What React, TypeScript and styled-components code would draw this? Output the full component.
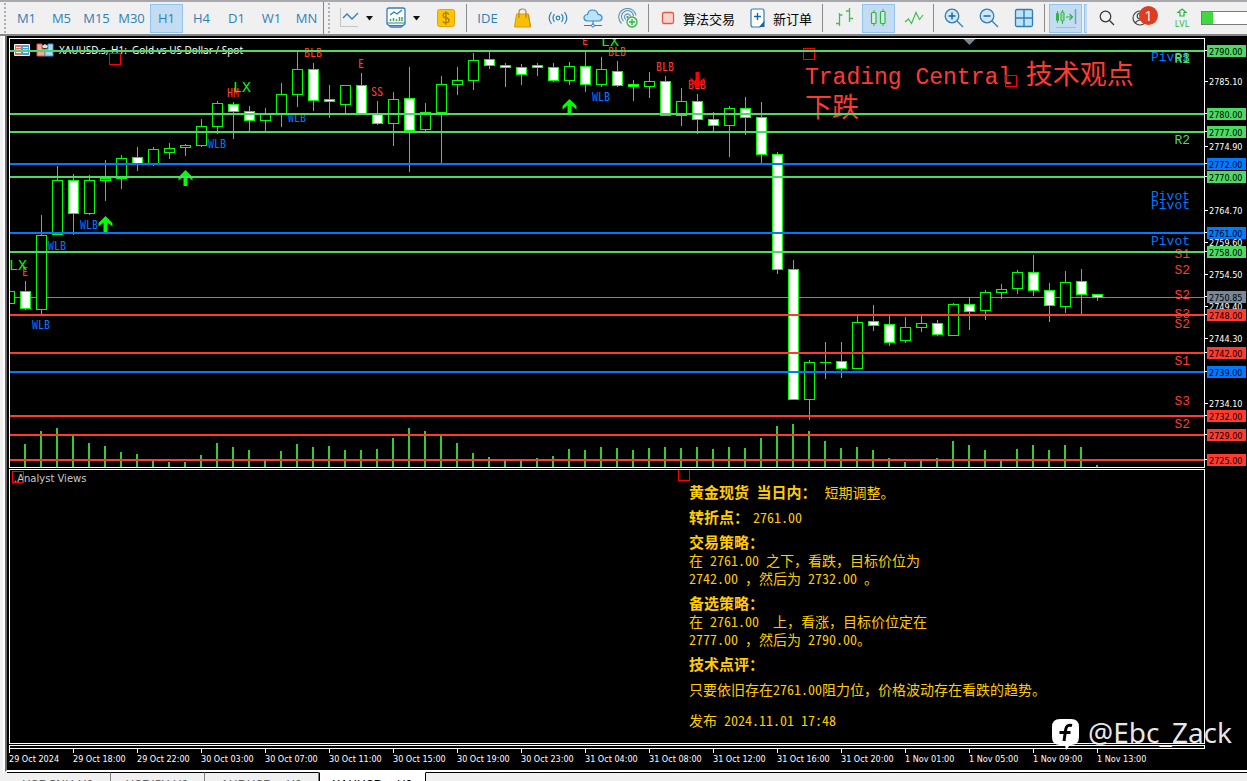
import React from "react";
import styled, { createGlobalStyle, css } from "styled-components";

const UP = "#4cd964";
const PIVOT = "#007aff";
const DOWN = "#ff3b30";
const CURRENT = "#778899";
const LIME = "#00ff00";
const AMBER = "#ffcc00";

const TERMINAL_FONT = `"Noto Sans CJK SC", "Liberation Mono", monospace`;
const MONO_FONT = `"Liberation Mono", "Noto Sans CJK SC", monospace`;
const AXIS_FONT = `"DejaVu Sans Condensed", "DejaVu Sans", sans-serif`;
const UI_FONT = `"Open Sans", "Noto Sans CJK SC", sans-serif`;

const GlobalStyle = createGlobalStyle`
  * { box-sizing: border-box; }
  body { margin: 0; background: #f0f0f0; font-family: ${UI_FONT}; }
  button { font: inherit; margin: 0; padding: 0; border: 0; background: none; color: inherit; }
`;

/* ---------- window ---------- */

const Window = styled.div`
  height: 100vh;
  display: flex;
  flex-direction: column;
  overflow: hidden;
  background: #f0f0f0;
`;

const Body = styled.div`
  flex: 1;
  display: grid;
  grid-template-columns: 5px minmax(0, 1fr);
`;

const Gutter = styled.div`
  border-right: 2px solid #fff;
  background: #f0f0f0;
`;

/* ---------- toolbar ---------- */

const ToolbarRow = styled.header`
  display: flex;
  align-items: center;
  flex: none;
  height: 36px;
  overflow: hidden;
  border-top: 2px solid #a8a8ac;
  border-bottom: 2px solid #868686;
  background: #f0f0f0;
  white-space: nowrap;
`;

const Group = styled.div`
  display: flex;
  flex: none;
  align-items: center;
  gap: 2px;
`;

const FrameGroup = styled(Group)`
  padding-left: 2px;
`;

const Grip = styled.i`
  flex: none;
  width: 2px;
  height: 30px;
  margin: 0 2px 0 4px;
  background: repeating-linear-gradient(#b0b0b0 0 2px, transparent 2px 4px);
`;

const BandEdge = styled.i`
  flex: none;
  width: 1px;
  align-self: stretch;
  background: #868686;
`;

const Separator = styled.i<{ $tight?: boolean }>`
  width: 1px;
  height: 28px;
  margin: 0 ${(p) => (p.$tight ? 1 : 2)}px;
  background: #8c8c8c;
`;

const pressed = css`
  background: #c3dcf2;
  border: 1px solid #90c5f2;
`;

const ToolButton = styled.button<{ $on?: boolean }>`
  display: flex;
  align-items: center;
  justify-content: center;
  flex: none;
  width: 33px;
  height: 29px;
  font-size: 13px;
  color: #2f7fb6;
  ${(p) => p.$on && pressed}
`;

const LabelButton = styled(ToolButton)`
  justify-content: flex-start;
  gap: 7px;
  width: auto;
  padding: 0 6px 0 7px;
  color: #000;
  font-family: "Noto Sans CJK SC", sans-serif;
`;

const CaretButton = styled.button`
  display: flex;
  align-items: center;
  width: 12px;
  height: 29px;
`;

const SplitButton = styled.div`
  display: flex;

  & + button { margin-left: 3px; }
`;

const Sliver = styled.i`
  width: 3px;
  height: 29px;
  margin-right: 1px;
  ${pressed}
  border-right: 0;
`;

const AccountButton = styled(ToolButton)`
  position: relative;
  width: 38px;
`;

const Badge = styled.span`
  position: absolute;
  top: 2px;
  right: 5px;
  width: 19px;
  height: 19px;
  border-radius: 50%;
  background: #e03c20;
  color: #fff;
  font-size: 14px;
  line-height: 19px;
  text-align: center;
`;

const LevelButton = styled(ToolButton)`
  flex-direction: column;
  gap: 2px;
  width: 34px;
  color: #2fb344;
  font-size: 9px;
  line-height: 9px;
`;

const Meter = styled.div`
  width: 60px;
  height: 14px;
  border: 1px solid #7a7a7a;
  background: #fff;
`;

const MeterFill = styled.div`
  width: 11px;
  height: 12px;
  background: #3fd83f;
`;

/* ---------- chart ---------- */

const ChartWindow = styled.main`
  display: flex;
  flex-direction: column;
  gap: 1px;
  padding: 2px 0 0 2px;
  border-left: 2px solid #6c6c6c;
  border-bottom: 2px solid #fff;
  background: #000;
`;

const ChartRow = styled.div`
  display: grid;
  grid-template-columns: minmax(0, 1fr) 42px;
`;

const Pane = styled.section`
  position: relative;
  border: 1px solid #fff;
  overflow: hidden;
`;

const Canvas = styled.svg`
  display: block;
  width: 100%;
  overflow: hidden;
`;

const PlotText = styled.text<{ $color: string }>`
  font-family: ${TERMINAL_FONT};
  font-feature-settings: "hwid";
  font-size: 12px;
  fill: ${(p) => p.$color};
`;

const MonoText = styled.text<{ $size: number; $color: string }>`
  font-family: ${MONO_FONT};
  font-size: ${(p) => p.$size}px;
  fill: ${(p) => p.$color};
`;

const Hanzi = styled.tspan`
  font-size: 27px;
`;

const AxisText = styled.text<{ $dark?: boolean }>`
  font-family: ${AXIS_FONT};
  font-size: 9px;
  fill: ${(p) => (p.$dark ? "#000" : "#fff")};
`;

const TitleText = styled.text`
  font-family: "Noto Sans", sans-serif;
  font-size: 10px;
  fill: #fff;
  white-space: pre;
`;

const Handle = styled.i<{ $left: number; $top: number }>`
  position: absolute;
  left: ${(p) => p.$left}px;
  top: ${(p) => p.$top}px;
  width: 12px;
  height: 12px;
  border: 1px solid #ff0000;
`;

const PaneName = styled.h2`
  position: absolute;
  left: 4px;
  top: 2px;
  margin: 0;
  color: #c8c8c8;
  font: 10px/14px "DejaVu Sans", sans-serif;
`;

const Report = styled.article`
  display: flex;
  flex-direction: column;
  gap: 7px;
  padding: 13px 0 14px 679px;
  color: ${AMBER};
  font-family: ${TERMINAL_FONT};
  font-feature-settings: "hwid";
  font-size: 14px;
  line-height: 18px;
  white-space: pre;

  p { margin: 0; }
`;

const Heading = styled.strong<{ $gap?: number }>`
  font-size: 15px;
  margin-right: ${(p) => p.$gap ?? 4}px;
`;

const FullWidth = styled.span`
  font-feature-settings: normal;
`;

const Published = styled.p`
  && { margin-top: 6px; }
`;

const Strip = styled.div`
  height: 4px;
  border: 1px solid #fff;
`;

const TimeAxis = styled.svg`
  display: block;
  width: 100%;
  height: 20px;
`;

/* ---------- tabs ---------- */

const TabBar = styled.nav`
  display: flex;
  flex: none;
  height: 9px;
  margin-left: 7px;
`;

const Tab = styled.button<{ $on?: boolean }>`
  flex: none;
  height: 24px;
  padding: 0 15px;
  border-top: 1px solid #000;
  border-right: 1px solid #808080;
  color: #606060;
  font: 12px/20px "DejaVu Sans", sans-serif;
  background: #f0f0f0;
  ${(p) =>
    p.$on &&
    css`
      padding: 0 12px;
      background: #fff;
      color: #000;
      border-top-color: #fff;
      border-left: 1px solid #000;
      border-right-color: #000;
    `}
`;

const TabRest = styled.div`
  flex: 1;
  border-top: 1px solid #000;
`;

/* ---------- watermark ---------- */

const Watermark = styled.div`
  position: absolute;
  right: 15px;
  bottom: 31px;
  display: flex;
  align-items: flex-end;
  gap: 8px;
  color: rgba(255, 255, 255, 0.92);
  font: 28px/36px "Noto Sans", sans-serif;
`;

/* ---------- data ---------- */

/* [high, body top, body bottom, low, bearish], one entry each 16px */
type Candle = [number, number, number, number, 0 | 1];

const candles: Candle[] = [
  [291, 291, 303, 303, 0], [281, 291, 308, 309, 1], [215, 235, 309, 314, 0], [166, 180, 234, 234, 0],
  [174, 180, 213, 234, 1], [175, 180, 213, 214, 0], [160, 178, 180, 200, 0], [155, 158, 178, 188, 0],
  [147, 157, 163, 170, 1], [147, 149, 163, 165, 0], [143, 148, 152, 158, 0], [144, 145, 147, 155, 0],
  [119, 126, 145, 146, 0], [101, 103, 126, 133, 0], [102, 104, 111, 138, 1], [106, 111, 120, 131, 1],
  [108, 114, 120, 131, 0], [83, 94, 114, 126, 0], [51, 69, 94, 106, 0], [63, 69, 100, 110, 1],
  [85, 99, 101, 117, 1], [85, 85, 104, 113, 0], [73, 85, 114, 114, 1], [101, 114, 123, 124, 1],
  [92, 99, 123, 145, 0], [67, 98, 130, 171, 1], [103, 112, 129, 132, 0], [76, 84, 112, 164, 0],
  [67, 80, 84, 94, 0], [53, 60, 80, 89, 0], [51, 59, 65, 68, 1], [63, 65, 67, 86, 1],
  [64, 67, 74, 84, 1], [63, 65, 67, 75, 1], [63, 67, 80, 81, 1], [62, 66, 80, 84, 0],
  [51, 66, 84, 91, 1], [57, 69, 84, 86, 0], [61, 71, 85, 86, 1], [80, 84, 86, 100, 1],
  [72, 81, 86, 97, 0], [76, 81, 115, 115, 1], [88, 101, 115, 125, 0], [94, 101, 119, 133, 1],
  [112, 119, 125, 131, 1], [106, 108, 125, 156, 0], [97, 108, 117, 134, 1], [102, 117, 154, 163, 1],
  [152, 154, 269, 273, 1], [260, 269, 399, 399, 1], [360, 362, 399, 419, 0], [342, 362, 362, 378, 0],
  [342, 361, 368, 377, 1], [316, 322, 368, 368, 0], [305, 321, 325, 330, 1], [316, 324, 342, 345, 1],
  [317, 327, 340, 342, 0], [316, 323, 327, 331, 0], [320, 323, 334, 335, 1], [303, 304, 335, 335, 0],
  [297, 304, 311, 329, 1], [290, 292, 310, 319, 0], [284, 289, 292, 298, 0], [270, 272, 288, 293, 0],
  [255, 272, 290, 295, 1], [283, 290, 305, 321, 1], [271, 282, 306, 312, 0], [269, 281, 294, 314, 1],
  [294, 294, 297, 300, 1],
];

const volumes = [
  444, 431, 428, 436, 443, 446, 452, 454, 461, 462, 462, 455, 443, 447, 450, 461, 451, 444, 447, 446, 450, 450, 449,
  438, 428, 431, 435, 443, 453, 457, 459, 460, 458, 456, 449, 450, 447, 448, 450, 448, 447, 448, 447, 449, 447, 448,
  438, 426, 424, 431, 441, 448, 447, 450, 458, 462, 461, 458, 441, 445, 450, 461, 449, 445, 450, 445, 447, 465,
];

const levels: [string, number, string][] = [
  ["2790.00", 51, UP], ["2780.00", 114, UP], ["2777.00", 132, UP], ["2772.00", 164, PIVOT], ["2770.00", 177, UP],
  ["2761.00", 233, PIVOT], ["2758.00", 252, UP], ["2748.00", 315, DOWN], ["2742.00", 353, DOWN],
  ["2739.00", 372, PIVOT], ["2732.00", 416, DOWN], ["2729.00", 435, DOWN], ["2725.00", 460, DOWN],
];

const ticks: [string, number][] = [
  ["2785.10", 81], ["2774.90", 146], ["2764.70", 210], ["2759.60", 242], ["2754.50", 274],
  ["2749.40", 306], ["2744.30", 338], ["2734.10", 403],
];

const marks: [string, number, number, string][] = [
  ["E", 22, 276, DOWN], ["WLB", 32, 329, PIVOT], ["WLB", 48, 250, PIVOT], ["WLB", 80, 229, PIVOT],
  ["WLB", 208, 148, PIVOT], ["HM", 227, 97, DOWN], ["WLB", 288, 122, PIVOT], ["BLB", 304, 57, DOWN],
  ["E", 358, 68, DOWN], ["SS", 371, 96, DOWN], ["E", 582, 45, DOWN], ["BLB", 608, 56, DOWN],
  ["WLB", 592, 101, PIVOT], ["BLB", 656, 71, DOWN], ["BLB", 688, 89, DOWN],
];

const crossings: [number, number][] = [[9, 270], [233, 92], [601, 46]];

const levelNames: [string, number, string][] = [
  ["Pivot", 61, PIVOT], ["R3", 62, UP], ["R1", 63, UP], ["R2", 144, UP], ["Pivot", 200, PIVOT], ["Pivot", 209, PIVOT],
  ["Pivot", 245, PIVOT], ["S1", 258, DOWN], ["S2", 274, DOWN], ["S2", 299, DOWN], ["S3", 318, DOWN],
  ["S2", 328, DOWN], ["S1", 365, DOWN], ["S3", 405, DOWN], ["S2", 428, DOWN],
];

const times = [
  "29 Oct 2024", "29 Oct 18:00", "29 Oct 22:00", "30 Oct 03:00", "30 Oct 07:00", "30 Oct 11:00", "30 Oct 15:00",
  "30 Oct 19:00", "30 Oct 23:00", "31 Oct 04:00", "31 Oct 08:00", "31 Oct 12:00", "31 Oct 16:00", "31 Oct 20:00",
  "1 Nov 01:00", "1 Nov 05:00", "1 Nov 09:00", "1 Nov 13:00",
];

/* ---------- icons ---------- */

const Icon = ({ children, w = 20, h = 20 }: { children: React.ReactNode; w?: number; h?: number }) => (
  <svg width={w} height={h} viewBox={`0 0 ${w} ${h}`} fill="none" aria-hidden="true">
    {children}
  </svg>
);

const Caret = () => (
  <Icon w={9} h={5}>
    <path d="M1 0h7L4.500 4.500z" fill="#111" />
  </Icon>
);

const LineStudyIcon = () => (
  <Icon>
    <path d="M1.500 0v18.500H19" stroke="#c4c4c4" />
    <path d="M4 10l4-4 5 5 6-6" stroke="#2f7fb6" strokeWidth="1.300" />
  </Icon>
);

const IndicatorsIcon = () => (
  <Icon w={20} h={22}>
    <path d="M1 3q0-2 2-2h14q2 0 2 2v14l-4 3H5l-4-3z" fill="#fff" stroke="#2f7fb6" strokeWidth="1.300" />
    <path d="M1 16h18M3 18.500h14" stroke="#2f7fb6" />
    <path d="M4 8l4-3 3 2 5-4" stroke="#2f7fb6" strokeWidth="1.300" />
    <path d="M4.500 14v-2M7.500 14v-3M10.500 14v-2M13.500 14v-4M16 14v-4" stroke="#2fb344" strokeWidth="1.500" />
  </Icon>
);

const DollarIcon = () => (
  <Icon>
    <rect x="1.500" y="1.500" width="17" height="17" rx="2" fill="#fbc504" stroke="#e2a500" />
    <path d="M13 6.500q-1-1.500-3-1.500-2.800 0-2.800 2.300T10 9.900t3 2.500-3 2.500q-2.200 0-3.200-1.600M10 3.300v13.400" stroke="#b07a10" strokeWidth="1.300" />
  </Icon>
);

const BagIcon = () => (
  <Icon>
    <path d="M3.500 6h12l2 13h-16z" fill="#f9bf06" stroke="#d39b10" />
    <path d="M6 10V4q0-3 3.500-3T13 4v6" stroke="#b58522" strokeWidth="1.200" />
    <path d="M15 6l2.500 13" stroke="#c98f14" />
  </Icon>
);

const SignalIcon = () => (
  <Icon>
    <circle cx="10" cy="10" r="1.800" stroke="#2f7fb6" strokeWidth="1.200" />
    <path d="M6.500 6.200q-3 3.800 0 7.600M13.500 6.200q3 3.800 0 7.600M3.500 4q-4.600 6 0 12M16.500 4q4.600 6 0 12" stroke="#2f7fb6" strokeWidth="1.200" />
  </Icon>
);

const CloudIcon = () => (
  <Icon>
    <path d="M4.500 13q-3.500-.5-3.500-3.300T4.500 6.500Q5.500 2 9.500 2q4.500 0 5.500 4.300 4 .2 4 3.500 0 3-3.500 3.200z" fill="#bfe2fb" stroke="#2f8ccc" strokeWidth="1.200" />
    <path d="M10 13v3M1 17.500h7.500M11.500 17.500H19" stroke="#2f7fb6" />
    <circle cx="10" cy="17.500" r="1.500" stroke="#2f7fb6" />
  </Icon>
);

const CommunityIcon = () => (
  <Icon>
    <path d="M3.500 15.500A8.700 8.700 0 1 1 18 7.500M5.500 13a6 6 0 1 1 10-5M8 11.500a3 3 0 1 1 4.500-3" stroke="#5a93bd" strokeWidth="1.100" />
    <circle cx="9.500" cy="9" r="1" fill="#2f7fb6" />
    <circle cx="14" cy="14" r="5" fill="#e6f8e6" stroke="#2fb344" strokeWidth="1.300" />
    <path d="M14 11v6M11 14h6" stroke="#2fb344" strokeWidth="1.400" />
  </Icon>
);

const StopIcon = () => (
  <Icon w={16} h={16}>
    <rect x="2.500" y="2.500" width="11" height="11" rx="1.500" fill="#fbd3cb" stroke="#e05a4c" strokeWidth="1.300" />
  </Icon>
);

const NewOrderIcon = () => (
  <Icon w={16} h={20}>
    <path d="M1 3q0-2 2-2h9q2 0 2 2v11l-4 5H3q-2 0-2-2z" fill="#fff" stroke="#2f7fb6" strokeWidth="1.200" />
    <path d="M14.500 13v6H9z" fill="#1a65a5" />
    <path d="M7.500 5v7M4 8.500h7" stroke="#1a65a5" strokeWidth="1.400" />
  </Icon>
);

const BarsIcon = () => (
  <Icon>
    <path d="M5.500 5v13M5.500 7h3M2 15.500h3.500M15.500 0v14M12 3h3.500M15.500 10.500H19" stroke="#3fbf4f" strokeWidth="1.300" />
  </Icon>
);

const CandlesIcon = () => (
  <Icon>
    <path d="M5 2v16M14 1v17" stroke="#2fb344" />
    <rect x="2.500" y="4.500" width="4.500" height="11" rx="1" fill="#d8efe4" stroke="#2fb344" strokeWidth="1.200" />
    <rect x="11.500" y="3.500" width="4.500" height="12" rx="1" fill="#d8efe4" stroke="#2fb344" strokeWidth="1.200" />
  </Icon>
);

const WaveIcon = () => (
  <Icon>
    <path d="M1 14l3.500-3 3 4.500 4.500-11 3.500 7L19 7" stroke="#3fbf4f" strokeWidth="1.200" />
  </Icon>
);

const ZoomIcon = ({ plus }: { plus?: boolean }) => (
  <Icon>
    <circle cx="8" cy="8" r="6.800" fill="#cfe7f9" stroke="#2f7fb6" strokeWidth="1.300" />
    <path d="M13 13l6 6" stroke="#2f7fb6" strokeWidth="1.300" />
    <path d={plus ? "M8 4.500v7M4.500 8h7" : "M4.500 8h7"} stroke="#1a65a5" strokeWidth="1.500" />
  </Icon>
);

const TilesIcon = () => (
  <Icon>
    <rect x="1.500" y="1.500" width="17" height="17" rx="1.500" fill="#bfe2fb" stroke="#2f7fb6" strokeWidth="1.300" />
    <path d="M10 1v18M1 10h18" stroke="#2f7fb6" strokeWidth="1.400" />
  </Icon>
);

const ShiftIcon = () => (
  <Icon w={22} h={20}>
    <path d="M2.500 3v12M7.500 2v14" stroke="#2fb344" />
    <rect x="1" y="5" width="3" height="8" rx="1" fill="#2fb344" />
    <rect x="6" y="4" width="3" height="9" rx="1" fill="#9bdca5" stroke="#2fb344" />
    <path d="M11 9h6M14.500 6L17.500 9l-3 3" stroke="#2fb344" strokeWidth="1.200" />
    <path d="M20.500 1v15" stroke="#7a9cc0" strokeWidth="1.500" />
    <path d="M1 19.500h20" stroke="#b0b8c0" />
  </Icon>
);

const SearchIcon = () => (
  <Icon w={16} h={16}>
    <circle cx="6.500" cy="6.500" r="5.300" stroke="#333" strokeWidth="1.200" />
    <path d="M10.500 10.500l4.500 4.500" stroke="#333" strokeWidth="1.200" />
  </Icon>
);

const AccountIcon = () => (
  <Icon w={24} h={18}>
    <circle cx="8" cy="9" r="7" stroke="#444" strokeWidth="1.200" />
    <circle cx="8" cy="7" r="2.800" stroke="#444" strokeWidth="1.200" />
    <path d="M3 14q5-6 10 0" stroke="#444" strokeWidth="1.200" />
  </Icon>
);

const LevelIcon = () => (
  <Icon w={12} h={9}>
    <path d="M6 1l4 3.500H8V8H4V4.500H2z" stroke="#2fb344" strokeWidth="1.200" />
  </Icon>
);

const BubbleLogo = () => (
  <Icon w={28} h={31}>
    <path d="M8 0h11q8 0 8 8v10q0 8-8 8h-1l-4 5-1-5H8q-8 0-8-8V8q0-8 8-8z" fill="#fff" />
    <path d="M20 6.500q-5.500-1.500-6.300 4L12 22M7.500 13.500h11" stroke="#000" strokeWidth="3" />
  </Icon>
);

/* ---------- chart pieces ---------- */

const FIRST_X = 9;
const STEP = 16;

const Arrow = ({ x, y, down }: { x: number; y: number; down?: boolean }) => (
  <path
    d="M0 0L7 7v3.500L2 6.500V16h-4V6.500L-7 10.500V7z"
    fill={down ? "#ff0000" : LIME}
    transform={`translate(${x + 0.5} ${y})${down ? " scale(1 -1)" : ""}`}
  />
);

const Square = ({ x, y }: { x: number; y: number }) => (
  <rect x={x + 0.5} y={y + 0.5} width="11" height="11" fill="none" stroke="#ff0000" />
);

const PricePlot = () => (
  <Canvas height="428">
    <g transform="translate(-10 -39)">
      <path d="M963.500 39h12L969.500 45z" fill={CURRENT} />
      <g>
        <rect x="14" y="44" width="16" height="12" rx="1" fill="#fff" />
        <path d="M15 45h7v10h-7z" fill="#e0705f" />
        <path d="M22 45h7v10h-7z" fill="#4a9be0" />
        <path d="M16 47.500h5M16 50h5M16 52.500h5M23 47.500h5M23 50h5M23 52.500h5" stroke="#fff" />
        <path d="M37 44h5v5h3v7h-8z" fill="#f3a89c" stroke="#d9584a" />
        <path d="M53 44h-5v5h-3v7h8z" fill="#a9d8f8" stroke="#3f97db" />
        <path d="M42 46l3-2 3 2-1 2h-4z" fill="#ddd" />
      </g>
      <TitleText x="59" y="54">XAUUSD.s, H1:{"  "}Gold vs US Dollar / Spot</TitleText>
      <rect x="10" y="297" width="100%" height="1" fill={CURRENT} />
      {volumes.map((top, i) => (
        <rect key={i} x={FIRST_X + STEP * (i + 1) - 1} y={top} width="2" height={467 - top} fill="#32cd32" />
      ))}
      {candles.map(([high, top, bottom, low, bear], i) => {
        const x = FIRST_X + STEP * i;
        return (
          <g key={i}>
            <rect x={x} y={high} width="1" height={low - high + 1} fill={LIME} />
            <rect x={x - 5} y={top} width="11" height={bottom - top + 1} fill={LIME} />
            {bottom - top > 1 && (
              <rect x={x - 4} y={top + 1} width="9" height={bottom - top - 1} fill={bear ? "#fff" : "#000"} />
            )}
          </g>
        );
      })}
      <Arrow x={105} y={216} />
      <Arrow x={185} y={170} />
      <Arrow x={569} y={99} />
      {marks.map(([label, x, y, color], i) => (
        <PlotText key={i} x={x} y={y} $color={color}>{label}</PlotText>
      ))}
      {crossings.map(([x, y]) => (
        <MonoText key={x} x={x} y={y} $color={LIME} $size={15}>LX</MonoText>
      ))}
      <Arrow x={697} y={88} down />
      <MonoText x="805" y="84" $color={DOWN} $size={23}>
        Trading Central <Hanzi>技术观点</Hanzi>
      </MonoText>
      <MonoText x="805" y="117" $color={DOWN} $size={23}><Hanzi>下跌</Hanzi></MonoText>
      <Square x={109} y={53} />
      <Square x={803} y={48} />
      <Square x={1005} y={75} />
    </g>
    {levelNames.map(([label, y, color], i) => (
      <MonoText key={i} x="100%" dx="-14" y={y - 39} textAnchor="end" $color={color} $size={13}>{label}</MonoText>
    ))}
    {levels.map(([price, y, color]) => (
      <rect key={price} x="0" y={y - 40} width="100%" height="2" fill={color} />
    ))}
  </Canvas>
);

const PriceScale = () => (
  <Canvas height="430">
    <g transform="translate(0 -38)">
      {ticks.map(([price, y]) => (
        <g key={price}>
          <rect x="0" y={y} width="3" height="1" fill="#fff" />
          <AxisText x="4" y={y + 4}>{price}</AxisText>
        </g>
      ))}
      {[...levels, ["2750.85", 297, CURRENT] as [string, number, string]].map(([price, y, color]) => (
        <g key={price}>
          <rect x="0" y={y - 1} width="2" height="1" fill="#fff" />
          <rect x="2" y={y - 6} width="39" height="12" fill={color} />
          <AxisText x="4" y={y + 4} $dark>{price}</AxisText>
        </g>
      ))}
    </g>
  </Canvas>
);

/* Half-width figures are on for the report; its commas stay full width. */
const Prose = ({ children }: { children: string }) => (
  <>
    {children.split(/(，)/).map((part, i) => (part === "，" ? <FullWidth key={i}>，</FullWidth> : part))}
  </>
);

const AnalystReport = () => (
  <Report>
    <p><Heading $gap={8}>黄金现货 当日内：</Heading>短期调整。</p>
    <p><Heading>转折点：</Heading>2761.00</p>
    <p><Heading>交易策略：</Heading><Prose>{"\n在 2761.00 之下，看跌，目标价位为\n2742.00 ，然后为 2732.00 。"}</Prose></p>
    <p><Heading>备选策略：</Heading><Prose>{"\n在 2761.00  上，看涨，目标价位定在\n2777.00 ，然后为 2790.00。"}</Prose></p>
    <p><Heading>技术点评：</Heading></p>
    <p><Prose>只要依旧存在2761.00阻力位，价格波动存在看跌的趋势。</Prose></p>
    <Published>发布 2024.11.01 17:48</Published>
  </Report>
);

const frames = ["M1", "M5", "M15", "M30", "H1", "H4", "D1", "W1", "MN"];

const Toolbar = () => (
  <ToolbarRow>
    <Grip />
    <FrameGroup>
      {frames.map((f) => (
        <ToolButton key={f} $on={f === "H1"}>{f}</ToolButton>
      ))}
    </FrameGroup>
    <BandEdge />
    <Grip />
    <Group>
      <SplitButton>
        <ToolButton aria-label="Line studies"><LineStudyIcon /></ToolButton>
        <CaretButton aria-label="More line studies"><Caret /></CaretButton>
      </SplitButton>
      <SplitButton>
        <ToolButton aria-label="Indicators"><IndicatorsIcon /></ToolButton>
        <CaretButton aria-label="More indicators"><Caret /></CaretButton>
      </SplitButton>
      <ToolButton aria-label="Symbols"><DollarIcon /></ToolButton>
      <Separator />
      <ToolButton>IDE</ToolButton>
      <ToolButton aria-label="Market"><BagIcon /></ToolButton>
      <ToolButton aria-label="Signals"><SignalIcon /></ToolButton>
      <ToolButton aria-label="Cloud"><CloudIcon /></ToolButton>
      <ToolButton aria-label="Community"><CommunityIcon /></ToolButton>
      <Separator />
      <LabelButton><StopIcon />算法交易</LabelButton>
      <LabelButton><NewOrderIcon />新订单</LabelButton>
      <Separator />
      <ToolButton aria-label="Bars"><BarsIcon /></ToolButton>
      <ToolButton aria-label="Candles" $on><CandlesIcon /></ToolButton>
      <ToolButton aria-label="Line"><WaveIcon /></ToolButton>
      <Separator $tight />
      <ToolButton aria-label="Zoom in"><ZoomIcon plus /></ToolButton>
      <ToolButton aria-label="Zoom out"><ZoomIcon /></ToolButton>
      <ToolButton aria-label="Tile windows"><TilesIcon /></ToolButton>
      <Separator />
      <ToolButton aria-label="Chart shift" $on><ShiftIcon /></ToolButton>
      <Sliver />
      <ToolButton aria-label="Search"><SearchIcon /></ToolButton>
      <AccountButton aria-label="Account"><AccountIcon /><Badge>1</Badge></AccountButton>
      <LevelButton><LevelIcon />LVL</LevelButton>
      <Meter><MeterFill /></Meter>
    </Group>
  </ToolbarRow>
);

export default function App() {
  return (
    <Window>
      <GlobalStyle />
      <Toolbar />
      <Body>
        <Gutter />
        <ChartWindow>
          <ChartRow>
            <Pane><PricePlot /></Pane>
            <PriceScale />
          </ChartRow>
          <ChartRow>
            <Pane>
              <PaneName>.Analyst Views</PaneName>
              <Handle $left={2} $top={1} />
              <Handle $left={668} $top={-1} />
              <AnalystReport />
            </Pane>
          </ChartRow>
          <div>
            <ChartRow><Strip /></ChartRow>
            <TimeAxis>
              {times.map((t, i) => (
                <g key={t} transform={`translate(${i * 64} 0)`}>
                  <rect x="0" y="0" width="1" height="4" fill="#fff" />
                  <AxisText x="0" y="13">{t}</AxisText>
                </g>
              ))}
            </TimeAxis>
          </div>
        </ChartWindow>
      </Body>
      <TabBar>
        <Tab>USDCNH,H1</Tab>
        <Tab>USDJPY,H1</Tab>
        <Tab>AUDUSD.s,H1</Tab>
        <Tab $on>XAUUSD.s,H1</Tab>
        <TabRest />
      </TabBar>
      <Watermark><BubbleLogo />@Ebc_Zack</Watermark>
    </Window>
  );
}
